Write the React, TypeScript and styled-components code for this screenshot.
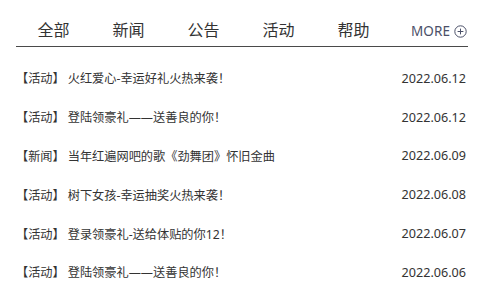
import React from "react";
import styled, { createGlobalStyle } from "styled-components";

const Global = createGlobalStyle`
  html, body { margin: 0; padding: 0; background: #fff; }
  body { font-family: "Noto Sans", "Noto Sans CJK SC", sans-serif; color: #333; }
`;

const Wrap = styled.div`
  width: 452px;
  margin-left: 16px;
`;

const Header = styled.div`
  display: flex;
  align-items: flex-end;
  height: 46px;
  border-bottom: 1.5px solid #4a4a4a;
`;

const Tab = styled.div`
  width: 75px;
  text-align: center;
  font-family: "Noto Sans CJK SC", sans-serif;
  font-size: 16px;
  line-height: 20px;
  padding-bottom: 7px;
  color: #333;
`;

const More = styled.div`
  margin-left: auto;
  display: flex;
  align-items: center;
  gap: 4px;
  padding-bottom: 6px;
  padding-right: 1px;
  color: #4b5068;
  font-family: "Noto Sans", sans-serif;
  font-size: 13.5px;
  line-height: 18px;
  letter-spacing: 0.1px;
`;

const List = styled.div`
  padding-top: 12px;
`;

const Row = styled.div`
  display: flex;
  align-items: center;
  height: 38.8px;
  padding-right: 2px;
  font-size: 12.2px;
  color: #333;
`;

const Cat = styled.span`
  font-family: "Noto Sans CJK SC", sans-serif;
  color: #333;
`;

const Title = styled.span`
  font-family: "Noto Sans", "Noto Sans CJK SC", sans-serif;
  margin-left: 3px;
  flex: 1;
  white-space: nowrap;
  color: #333;
`;

const Date = styled.span`
  font-family: "Noto Sans", sans-serif;
  font-size: 12.6px;
  color: #333;
`;

const PlusCircle = () => (
  <svg width="13" height="13" viewBox="0 0 13 13" fill="none">
    <circle cx="6.5" cy="6.5" r="5.7" stroke="#4b5068" strokeWidth="1" />
    <path d="M6.5 3.6v5.8M3.6 6.5h5.8" stroke="#4b5068" strokeWidth="1" />
  </svg>
);

const tabs = ["全部", "新闻", "公告", "活动", "帮助"];

const items = [
  { cat: "【活动】", title: "火红爱心-幸运好礼火热来袭！", date: "2022.06.12" },
  { cat: "【活动】", title: "登陆领豪礼——送善良的你！", date: "2022.06.12" },
  { cat: "【新闻】", title: "当年红遍网吧的歌《劲舞团》怀旧金曲", date: "2022.06.09" },
  { cat: "【活动】", title: "树下女孩-幸运抽奖火热来袭！", date: "2022.06.08" },
  { cat: "【活动】", title: "登录领豪礼-送给体贴的你12！", date: "2022.06.07" },
  { cat: "【活动】", title: "登陆领豪礼——送善良的你！", date: "2022.06.06" },
];

export default function App() {
  return (
    <>
      <Global />
      <Wrap>
        <Header>
          {tabs.map((t) => (
            <Tab key={t}>{t}</Tab>
          ))}
          <More>
            MORE <PlusCircle />
          </More>
        </Header>
        <List>
          {items.map((it, i) => (
            <Row key={i}>
              <Cat>{it.cat}</Cat>
              <Title>{it.title}</Title>
              <Date>{it.date}</Date>
            </Row>
          ))}
        </List>
      </Wrap>
    </>
  );
}
